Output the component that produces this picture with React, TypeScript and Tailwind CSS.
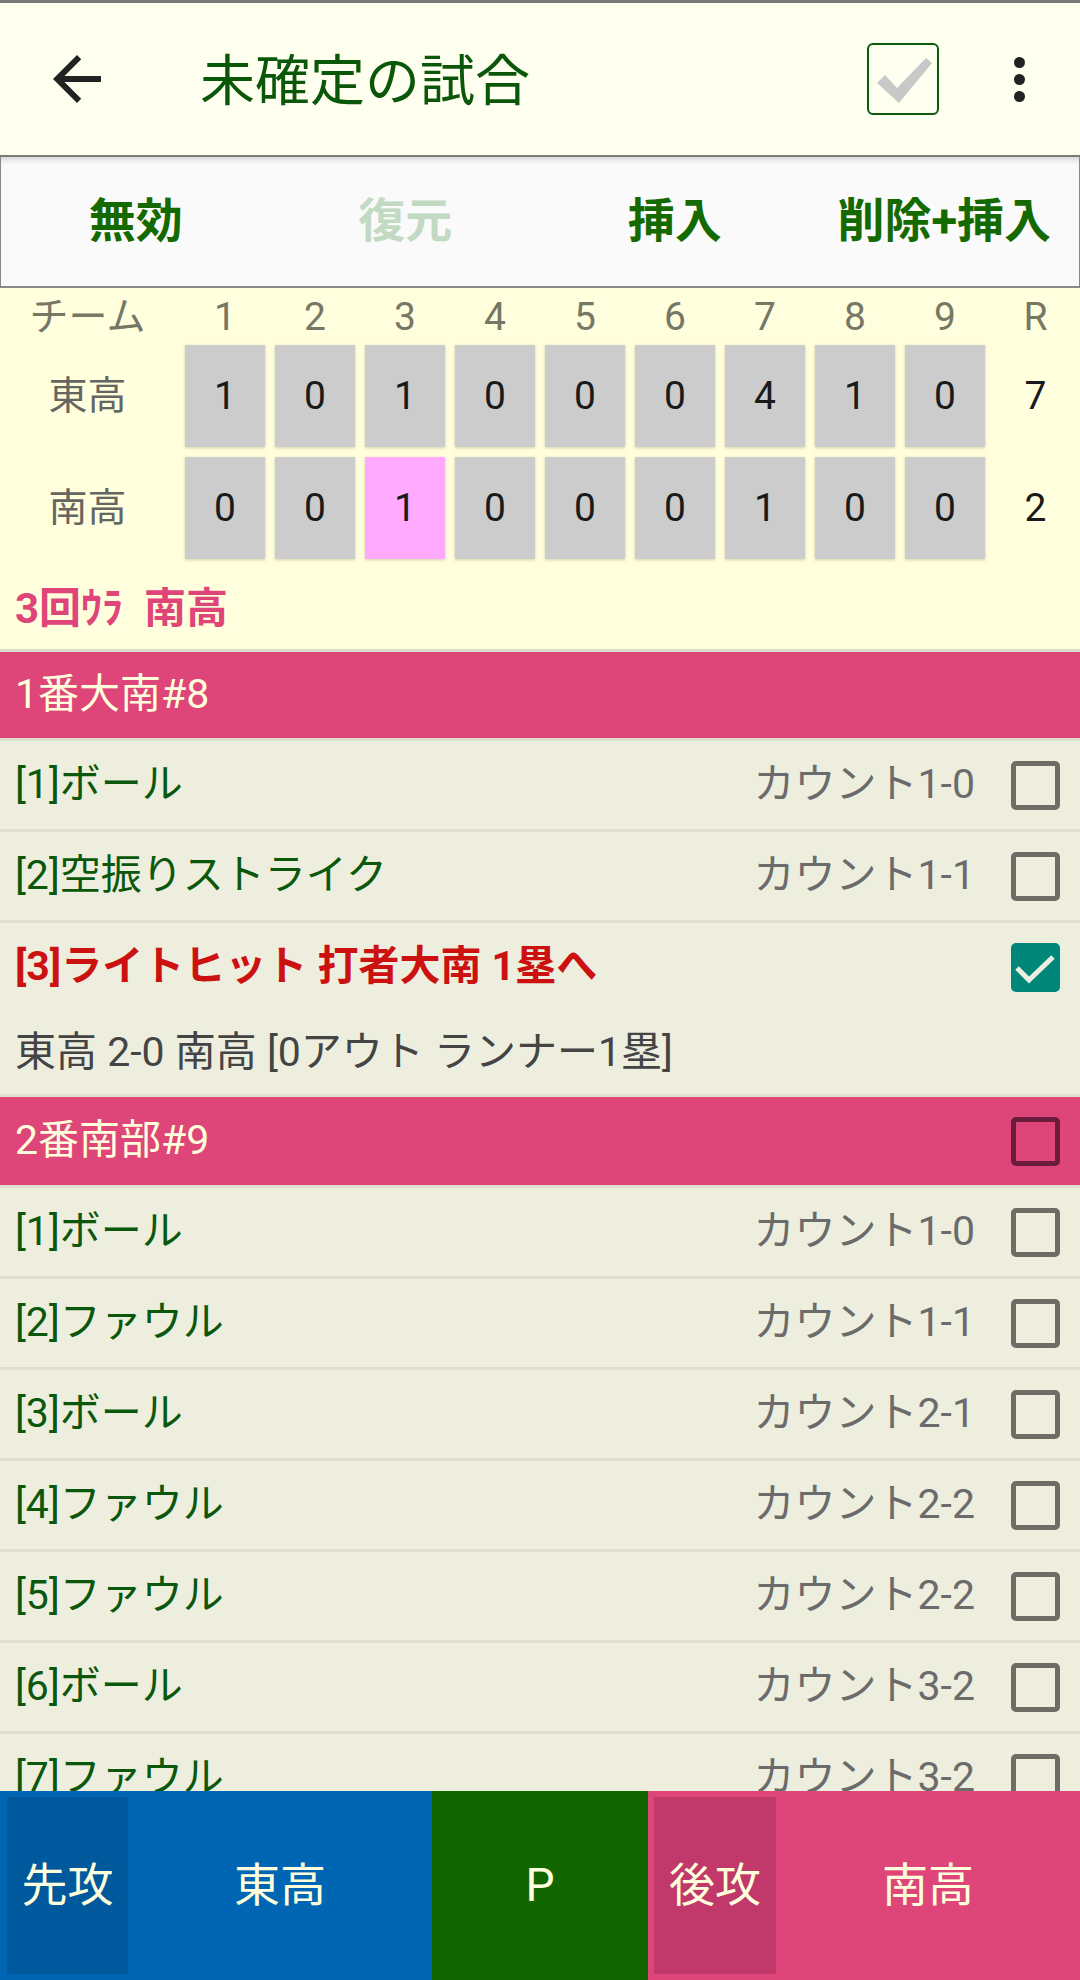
import React from "react";

type Pitch = {
  label: string;
  count: string;
};

const innings = [1, 2, 3, 4, 5, 6, 7, 8, 9];

const scores = [
  { team: "東高", runs: [1, 0, 1, 0, 0, 0, 4, 1, 0], total: 7, current: -1 },
  { team: "南高", runs: [0, 0, 1, 0, 0, 0, 1, 0, 0], total: 2, current: 2 },
];

const firstBatter: Pitch[] = [
  { label: "[1]ボール", count: "カウント1-0" },
  { label: "[2]空振りストライク", count: "カウント1-1" },
];

const secondBatter: Pitch[] = [
  { label: "[1]ボール", count: "カウント1-0" },
  { label: "[2]ファウル", count: "カウント1-1" },
  { label: "[3]ボール", count: "カウント2-1" },
  { label: "[4]ファウル", count: "カウント2-2" },
  { label: "[5]ファウル", count: "カウント2-2" },
  { label: "[6]ボール", count: "カウント3-2" },
  { label: "[7]ファウル", count: "カウント3-2" },
];

function Box({ tone = "gray" }: { tone?: "gray" | "dark" }) {
  return (
    <div
      className={
        tone === "dark"
          ? "h-[49px] w-[49px] shrink-0 rounded-[5px] border-[5px] border-[#6a1c3c]"
          : "h-[49px] w-[49px] shrink-0 rounded-[5px] border-[5px] border-[#6d6d66]"
      }
    />
  );
}

function CheckedBox() {
  return (
    <div className="h-[49px] w-[49px] shrink-0 rounded-[5px] bg-[#00877a]">
      <svg viewBox="0 0 49 49" className="h-full w-full">
        <polyline points="6,25 18,37 42,14" fill="none" stroke="#eeeedf" strokeWidth="5" />
      </svg>
    </div>
  );
}

function PitchRow({ pitch }: { pitch: Pitch }) {
  return (
    <div className="flex h-[91px] shrink-0 items-center border-b-[3px] border-[#dfdfd0] bg-[#eeeedf] pl-[15px] pr-[20px]">
      <span className="flex-1 text-[41px] text-[#0b570b]">{pitch.label}</span>
      <span className="mr-[36px] text-[41px] text-[#6b6b6b]">{pitch.count}</span>
      <Box />
    </div>
  );
}

export default function App() {
  return (
    <div
      className="flex h-[1980px] w-[1080px] flex-col overflow-hidden bg-[#ffffdd]"
      style={{ fontFamily: 'Roboto, "Noto Sans CJK JP", sans-serif' }}
    >
      <div className="h-[3px] shrink-0 bg-[#7a7a7a]" />

      {/* app bar */}
      <header className="flex h-[154px] shrink-0 items-center border-b-2 border-[#7a7a7a] bg-[#fffff0]">
        <svg viewBox="0 0 24 24" className="ml-[41px] h-[72px] w-[72px]">
          <path
            fill="#222222"
            d="M20 11H7.83l5.59-5.59L12 4l-8 8 8 8 1.41-1.41L7.83 13H20v-2z"
          />
        </svg>
        <h1 className="ml-[87px] mt-[4px] flex-1 text-[55px] leading-none text-[#0a570a]">未確定の試合</h1>
        <div className="h-[72px] w-[72px] rounded-[6px] border-2 border-[#0d5a0d]">
          <svg viewBox="0 0 68 68" className="h-full w-full">
            <path fill="#c8c8c8" d="M8 38 L16 30 L28 43 L57 13 L63 18 L30 58 Z" />
          </svg>
        </div>
        <div className="ml-[68px] mr-[49px] flex w-[24px] flex-col items-center gap-[6px]">
          <span className="h-[11px] w-[11px] rounded-full bg-[#222222]" />
          <span className="h-[11px] w-[11px] rounded-full bg-[#222222]" />
          <span className="h-[11px] w-[11px] rounded-full bg-[#222222]" />
        </div>
      </header>

      {/* action bar */}
      <div className="grid h-[131px] shrink-0 grid-cols-4 items-center border-x border-b-2 border-[#888888] bg-[#fafafa] text-center text-[47px] font-bold shadow-[inset_0_7px_6px_-5px_rgba(0,0,0,0.18)]">
        <span className="text-[#146a00]">無効</span>
        <span className="text-[#c2d9c2]">復元</span>
        <span className="text-[#146a00]">挿入</span>
        <span className="text-[#146a00]">削除+挿入</span>
      </div>

      {/* scoreboard */}
      <div className="shrink-0 bg-[#ffffdd]">
        <div className="grid h-[57px] grid-cols-[175px_repeat(9,80px)_1fr] items-center gap-x-[10px] pb-[2px] pr-[4px] text-center text-[39px] text-[#777766]">
          <span>チーム</span>
          {innings.map((n) => (
            <span key={n}>{n}</span>
          ))}
          <span>R</span>
        </div>
        {scores.map((row, i) => (
          <div
            key={row.team}
            className={
              i === 0
                ? "grid h-[102px] grid-cols-[175px_repeat(9,80px)_1fr] items-center gap-x-[10px] pr-[4px] text-center"
                : "mt-[10px] grid h-[102px] grid-cols-[175px_repeat(9,80px)_1fr] items-center gap-x-[10px] pr-[4px] text-center"
            }
          >
            <span className="text-[39px] text-[#666660]">{row.team}</span>
            {row.runs.map((r, j) => (
              <div
                key={j}
                className={
                  j === row.current
                    ? "flex h-full items-center justify-center bg-[#ffaaff] text-[39px] text-[#1a1a1a] shadow-[0_1px_3px_rgba(120,120,60,0.35)]"
                    : "flex h-full items-center justify-center bg-[#cccccc] text-[39px] text-[#1a1a1a] shadow-[0_1px_3px_rgba(120,120,60,0.35)]"
                }
              >
                {r}
              </div>
            ))}
            <span className="text-[39px] text-[#1a1a1a]">{row.total}</span>
          </div>
        ))}
        <div className="flex h-[90px] items-center pl-[15px] pt-[8px] text-[42px] font-bold text-[#e0457a]">
          3回ｳﾗ&nbsp;&nbsp;南高
        </div>
      </div>

      {/* play list */}
      <div className="flex min-h-0 flex-1 flex-col overflow-hidden border-t-[3px] border-[#dcdccc]">
        <div className="flex h-[89px] shrink-0 items-center border-b-[3px] border-[#dfdfd0] bg-[#de4578] pl-[15px] text-[41px] text-[#ffffdd]">
          1番大南#8
        </div>
        {firstBatter.map((p) => (
          <PitchRow key={p.label} pitch={p} />
        ))}
        <div className="flex h-[174px] shrink-0 flex-col border-b-[3px] border-[#dfdfd0] bg-[#eeeedf] pl-[15px] pr-[20px]">
          <div className="flex h-[88px] items-center">
            <span className="flex-1 text-[41px] font-bold text-[#cc1111]">[3]ライトヒット 打者大南 1塁へ</span>
            <CheckedBox />
          </div>
          <div className="flex h-[83px] items-center text-[41px] text-[#444444]">
            東高 2-0 南高 [0アウト ランナー1塁]
          </div>
        </div>
        <div className="flex h-[91px] shrink-0 items-center border-b-[3px] border-[#dfdfd0] bg-[#de4578] pl-[15px] pr-[20px]">
          <span className="flex-1 text-[41px] text-[#ffffdd]">2番南部#9</span>
          <Box tone="dark" />
        </div>
        {secondBatter.map((p) => (
          <PitchRow key={p.label} pitch={p} />
        ))}
      </div>

      {/* team bar */}
      <div className="flex h-[189px] shrink-0 text-[46px] text-[#ffffdd]">
        <div className="flex w-[432px] bg-[#0066b3] py-[6px] pl-[7px]">
          <div className="flex w-[121px] items-center justify-center bg-[#00599d]">先攻</div>
          <div className="flex flex-1 items-center justify-center">東高</div>
        </div>
        <div className="flex w-[216px] items-center justify-center bg-[#126600]">P</div>
        <div className="flex flex-1 bg-[#de4578] py-[6px] pl-[6px]">
          <div className="flex w-[122px] items-center justify-center bg-[#c0396a]">後攻</div>
          <div className="flex flex-1 items-center justify-center">南高</div>
        </div>
      </div>
    </div>
  );
}
